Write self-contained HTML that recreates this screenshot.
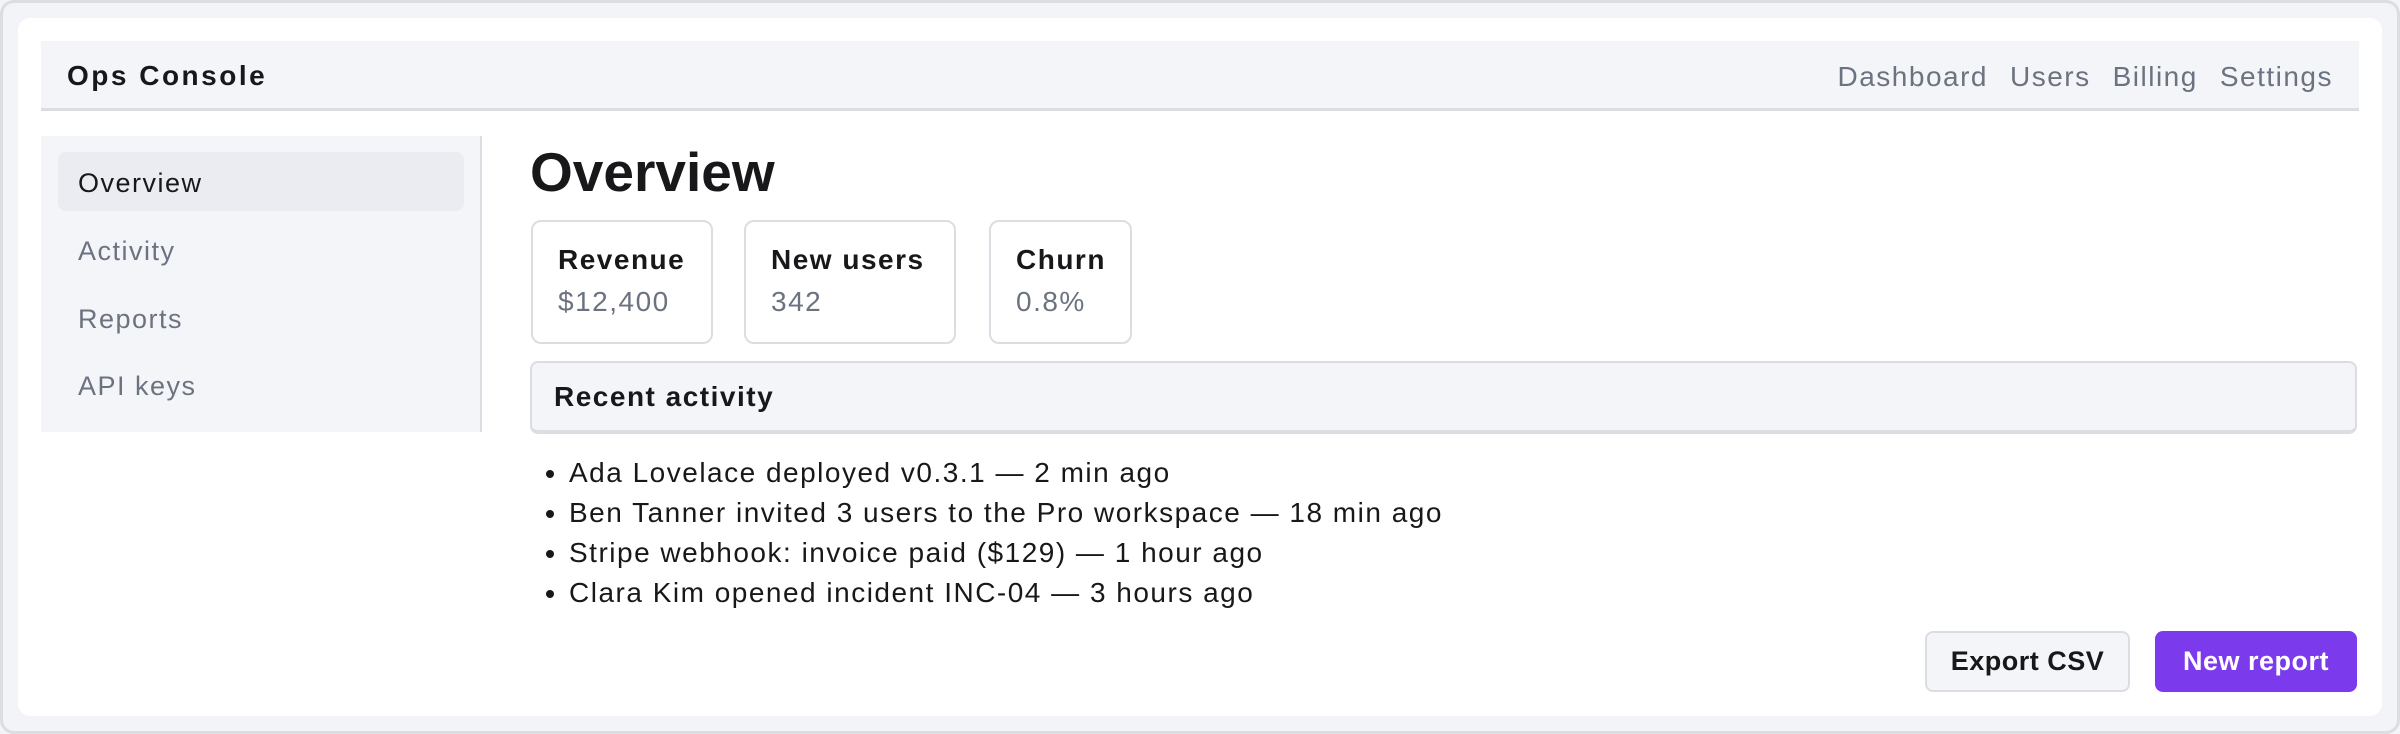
<!DOCTYPE html>
<html><head><meta charset="utf-8"><style>
*{box-sizing:border-box;margin:0;padding:0}
html,body{width:2400px;height:734px;overflow:hidden}
body{background:#f3f4f8;font-family:"Liberation Sans",sans-serif;color:#18181b;position:relative;letter-spacing:1.5px}
.frame{position:absolute;left:0;top:0;width:2400px;height:734px;border:3px solid #dcdde3;border-radius:14px}
.card{position:absolute;left:18px;top:18px;width:2364px;height:698px;background:#fff;border-radius:12px}
.hdr{position:absolute;left:41px;top:41px;width:2318px;height:70px;background:#f4f5f8;border-bottom:3px solid #dcdde3}
.brand{position:absolute;left:26px;top:19px;font-size:28px;font-weight:bold;letter-spacing:2.5px}
.nav{position:absolute;right:26px;top:20px;font-size:28px;color:#6b7280}
.nav span{margin-left:22px}
.side{position:absolute;left:41px;top:136px;width:441px;height:296px;background:#f4f5f8;border-right:2px solid #dcdde3}
.item{position:absolute;left:17px;width:406px;height:59px;font-size:27px;color:#6b7280;padding:16px 20px;border-radius:8px}
.item.act{background:#ebecf1;color:#18181b}
h1{position:absolute;left:530px;top:140px;font-size:55px;font-weight:bold;letter-spacing:0}
.stat{position:absolute;top:220px;height:124px;border:2px solid #dcdde3;border-radius:10px;padding:22px 0 0 25px}
.stat b{display:block;font-size:28px;margin-bottom:10px}
.stat span{font-size:28px;color:#6b7280}
.ra{position:absolute;left:530px;top:361px;width:1827px;height:73px;background:#f4f5f8;border:2px solid #dcdde3;border-bottom-width:4px;border-radius:8px;padding:18px 22px;font-size:28px;font-weight:bold}
ul{position:absolute;left:569px;top:453px;font-size:28px;line-height:40px}
li{padding-left:0}
.btn{position:absolute;top:631px;height:61px;border-radius:8px;font-size:27px;text-align:center;line-height:57px;font-weight:bold;letter-spacing:0.5px}
</style></head><body>
<div class="frame"></div>
<div class="card"></div>
<div class="hdr"><div class="brand">Ops Console</div><div class="nav"><span>Dashboard</span><span>Users</span><span>Billing</span><span>Settings</span></div></div>
<div class="side">
<div class="item act" style="top:16px">Overview</div>
<div class="item" style="top:84px">Activity</div>
<div class="item" style="top:152px">Reports</div>
<div class="item" style="top:219px">API keys</div>
</div>
<h1>Overview</h1>
<div class="stat" style="left:531px;width:182px"><b>Revenue</b><span>$12,400</span></div>
<div class="stat" style="left:744px;width:212px"><b>New users</b><span>342</span></div>
<div class="stat" style="left:989px;width:143px"><b>Churn</b><span>0.8%</span></div>
<div class="ra">Recent activity</div>
<ul>
<li>Ada Lovelace deployed v0.3.1 — 2 min ago</li>
<li>Ben Tanner invited 3 users to the Pro workspace — 18 min ago</li>
<li>Stripe webhook: invoice paid ($129) — 1 hour ago</li>
<li>Clara Kim opened incident INC-04 — 3 hours ago</li>
</ul>
<div class="btn" style="left:1925px;width:205px;background:#f4f5f8;border:2px solid #dcdde3">Export CSV</div>
<div class="btn" style="left:2155px;width:202px;background:#7c3aed;color:#fff;line-height:61px">New report</div>
</body></html>
